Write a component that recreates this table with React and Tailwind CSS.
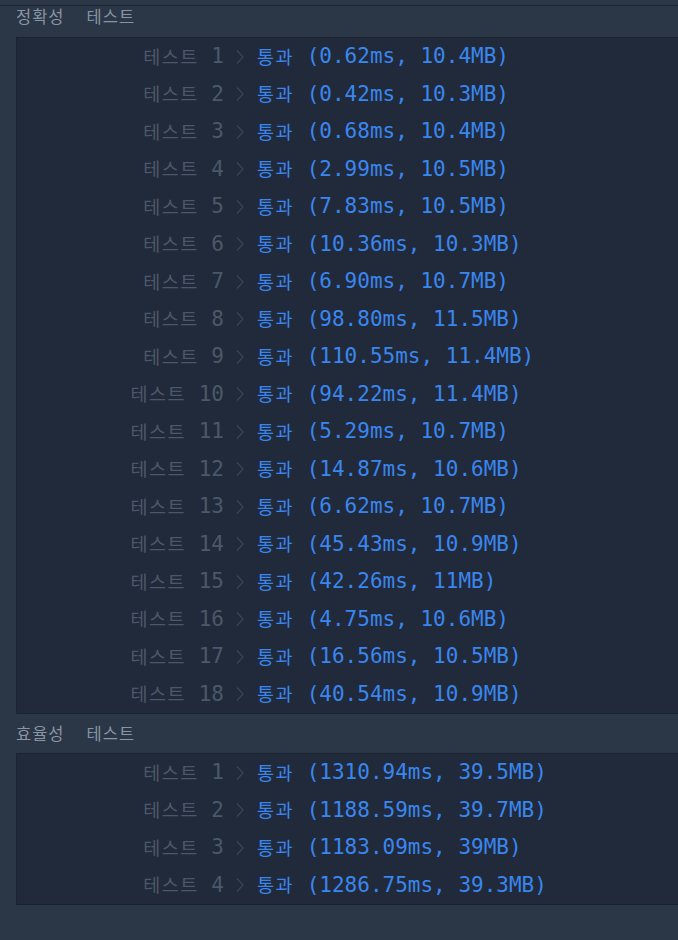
const ACCURACY = [
  ["0.62ms", "10.4MB"],
  ["0.42ms", "10.3MB"],
  ["0.68ms", "10.4MB"],
  ["2.99ms", "10.5MB"],
  ["7.83ms", "10.5MB"],
  ["10.36ms", "10.3MB"],
  ["6.90ms", "10.7MB"],
  ["98.80ms", "11.5MB"],
  ["110.55ms", "11.4MB"],
  ["94.22ms", "11.4MB"],
  ["5.29ms", "10.7MB"],
  ["14.87ms", "10.6MB"],
  ["6.62ms", "10.7MB"],
  ["45.43ms", "10.9MB"],
  ["42.26ms", "11MB"],
  ["4.75ms", "10.6MB"],
  ["16.56ms", "10.5MB"],
  ["40.54ms", "10.9MB"],
];

const EFFICIENCY = [
  ["1310.94ms", "39.5MB"],
  ["1188.59ms", "39.7MB"],
  ["1183.09ms", "39MB"],
  ["1286.75ms", "39.3MB"],
];

const MONO = "font-['DejaVu_Sans_Mono','Noto_Sans_CJK_KR',monospace]";

export default function App() {
  return (
    <div className={`min-h-screen bg-[#2b3646] ${MONO}`}>
      <div className="h-[5px]" />
      <div className="h-px bg-[#1c2431]" />

      <SectionTitle first>정확성</SectionTitle>
      <Panel rows={ACCURACY} />

      <SectionTitle>효율성</SectionTitle>
      <Panel rows={EFFICIENCY} />
    </div>
  );
}

function SectionTitle({ children, first }) {
  return (
    <div
      className={`flex items-start gap-[22px] pl-4 text-[16.5px] leading-5 tracking-[1px] text-[#8795a5] font-['Noto_Sans_CJK_KR',sans-serif] ${
        first ? "h-[31px] pt-0" : "h-[39px] pt-[9px]"
      }`}
    >
      <span>{children}</span>
      <span>테스트</span>
    </div>
  );
}

function Panel({ rows }) {
  return (
    <div className="ml-4 border-y border-l border-[#1b2230] bg-[#212a3a]">
      {rows.map(([time, mem], i) => (
        <Row key={i} n={i + 1} time={time} mem={mem} />
      ))}
    </div>
  );
}

function Row({ n, time, mem }) {
  return (
    <div className="flex h-[37.5px] items-center text-[21px] whitespace-pre">
      <div className="w-[207px] flex items-center justify-end text-[#4b5869]">
        <span className="text-[18.5px] tracking-[1.5px] font-['Noto_Sans_CJK_KR',sans-serif]">테스트</span>
        <span>{" " + n}</span>
      </div>
      <svg className="ml-[12px] mr-[13px]" width="8" height="16" viewBox="0 0 8 16" fill="none">
        <path d="M1 1.5 L7 8 L1 14.5" stroke="#3a4556" strokeWidth="1.2" />
      </svg>
      <div className="flex items-center text-[#3a86ef]">
        <span className="text-[18.5px] tracking-[1.5px] font-['Noto_Sans_CJK_KR',sans-serif]">통과</span>
        <span>{` (${time}, ${mem})`}</span>
      </div>
    </div>
  );
}
